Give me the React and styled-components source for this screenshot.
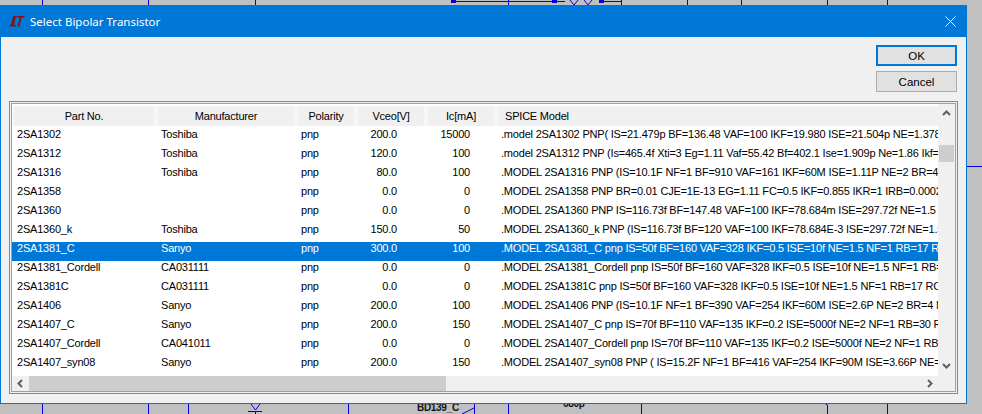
import React from 'react';
import styled, { createGlobalStyle } from 'styled-components';

const GlobalStyle = createGlobalStyle`
  html, body {
    margin: 0;
    padding: 0;
    background: #c0c0c0;
    overflow: hidden;
  }
`;

const columns = '2px 140px 4px 136px 4px 56px 4px 66px 4px 66px 4px 1fr';

const rows = [
  ['2SA1302', 'Toshiba', 'pnp', '200.0', '15000', '.model 2SA1302 PNP( IS=21.479p BF=136.48 VAF=100 IKF=19.980 ISE=21.504p NE=1.378 BR=3'],
  ['2SA1312', 'Toshiba', 'pnp', '120.0', '100', '.model 2SA1312 PNP (Is=465.4f Xti=3 Eg=1.11 Vaf=55.42 Bf=402.1 Ise=1.909p Ne=1.86 Ikf=0.1'],
  ['2SA1316', 'Toshiba', 'pnp', '80.0', '100', '.MODEL 2SA1316 PNP (IS=10.1F NF=1 BF=910 VAF=161 IKF=60M ISE=1.11P NE=2 BR=4 NR=1'],
  ['2SA1358', '', 'pnp', '0.0', '0', '.MODEL 2SA1358 PNP BR=0.01 CJE=1E-13 EG=1.11 FC=0.5 IKF=0.855 IKR=1 IRB=0.0002 ISE=1'],
  ['2SA1360', '', 'pnp', '0.0', '0', '.MODEL 2SA1360 PNP IS=116.73f BF=147.48 VAF=100 IKF=78.684m ISE=297.72f NE=1.5 BR=1'],
  ['2SA1360_k', 'Toshiba', 'pnp', '150.0', '50', '.MODEL 2SA1360_k PNP (IS=116.73f BF=120 VAF=100 IKF=78.684E-3 ISE=297.72f NE=1.5 BR=1'],
  ['2SA1381_C', 'Sanyo', 'pnp', '300.0', '100', '.MODEL 2SA1381_C pnp IS=50f BF=160 VAF=328 IKF=0.5 ISE=10f NE=1.5 NF=1 RB=17 RC=1.1'],
  ['2SA1381_Cordell', 'CA031111', 'pnp', '0.0', '0', '.MODEL 2SA1381_Cordell pnp IS=50f BF=160 VAF=328 IKF=0.5 ISE=10f NE=1.5 NF=1 RB=17 RC=1'],
  ['2SA1381C', 'CA031111', 'pnp', '0.0', '0', '.MODEL 2SA1381C pnp IS=50f BF=160 VAF=328 IKF=0.5 ISE=10f NE=1.5 NF=1 RB=17 RC=1.1'],
  ['2SA1406', 'Sanyo', 'pnp', '200.0', '100', '.MODEL 2SA1406 PNP (IS=10.1F NF=1 BF=390 VAF=254 IKF=60M ISE=2.6P NE=2 BR=4 NR=1'],
  ['2SA1407_C', 'Sanyo', 'pnp', '200.0', '150', '.MODEL 2SA1407_C pnp IS=70f BF=110 VAF=135 IKF=0.2 ISE=5000f NE=2 NF=1 RB=30 RC=1'],
  ['2SA1407_Cordell', 'CA041011', 'pnp', '0.0', '0', '.MODEL 2SA1407_Cordell pnp IS=70f BF=110 VAF=135 IKF=0.2 ISE=5000f NE=2 NF=1 RB=30 RC=1'],
  ['2SA1407_syn08', 'Sanyo', 'pnp', '200.0', '150', '.MODEL 2SA1407_syn08 PNP ( IS=15.2F NF=1 BF=416 VAF=254 IKF=90M ISE=3.66P NE=2 BR=4'],
];

const Page = styled.div`
  position: relative;
  width: 982px;
  height: 414px;
  padding-top: 5px;
  box-sizing: border-box;
  background: #c0c0c0;
  font-family: "Liberation Sans", Arial, sans-serif;
  font-size: 11px;
  color: #000;
  overflow: hidden;
`;

const Schematic = styled.svg`
  position: absolute;
  inset: 0;
`;

const PartLabel = styled.span`
  position: absolute;
  left: ${p => p.$x}px;
  top: ${p => p.$y}px;
  font-size: 10px;
  font-weight: bold;
  line-height: 12px;
  letter-spacing: -0.3px;
  color: #111;
`;

const Dialog = styled.div`
  position: relative;
  width: 967px;
  height: 399px;
  box-sizing: border-box;
  border: 1px solid #0078d7;
  background: #f0f0f0;
  display: flex;
  flex-direction: column;
`;

const TitleBar = styled.div`
  height: 31px;
  flex: none;
  background: #0078d7;
  display: flex;
  align-items: center;
  padding: 0 10px 0 8px;
  gap: 5px;
  color: #fff;
  font-family: "Noto Sans", "Liberation Sans", sans-serif;
  font-size: 11.5px;
`;

const Title = styled.span`
  flex: 1;
`;

const Buttons = styled.div`
  flex: none;
  height: 64px;
  display: flex;
  flex-direction: column;
  align-items: flex-end;
  gap: 5px;
  padding: 8px 9px 0 0;
  box-sizing: border-box;
`;

const Button = styled.button`
  width: 81px;
  height: 21px;
  padding: 0;
  box-sizing: border-box;
  background: #e1e1e1;
  border: ${p => (p.$primary ? '2px solid #0078d7' : '1px solid #adadad')};
  font: inherit;
  font-size: 11.5px;
  color: #000;
`;

const ListFrame = styled.div`
  margin: 0 8px;
  height: 293px;
  box-sizing: border-box;
  border: 1px solid #828790;
  padding: 1px;
  background: #f0f0f0;
`;

const ListInner = styled.div`
  height: 100%;
  box-sizing: border-box;
  border: 1px solid #a0a0a0;
  display: grid;
  grid-template-columns: 1fr 17px;
  grid-template-rows: 1fr 15px;
  background: #f0f0f0;
`;

const Table = styled.div`
  overflow: hidden;
  background: #fff;
`;

const Row = styled.div`
  display: grid;
  grid-template-columns: ${columns};
  height: ${p => (p.$header ? '22px' : '19px')};
  padding-bottom: ${p => (p.$header ? '0' : '7px')};
  align-items: center;
  background: ${p => (p.$selected ? '#0078d7' : p.$header ? '#f5f6fb' : '#fff')};
  color: ${p => (p.$selected ? '#fff' : '#000')};
  border-top: ${p => (p.$header ? '2px solid #fff' : 'none')};
  box-sizing: border-box;
  margin-bottom: ${p => (p.$header ? '2px' : '0')};
`;

const Spacer = styled.span`
  display: block;
`;

const textStyle = `
  font-size: 11px;
  letter-spacing: -0.2px;
`;

const HeadCell = styled.div`
  ${textStyle}
  height: 100%;
  display: flex;
  align-items: center;
  justify-content: ${p => (p.$left ? 'flex-start' : 'center')};
  padding-left: ${p => (p.$left ? '7px' : '0')};
  box-sizing: border-box;
  background: #f0f0f0;
`;

const Cell = styled.div`
  ${textStyle}
  white-space: nowrap;
  overflow: hidden;
  line-height: 14px;
  text-align: ${p => (p.$pad ? 'right' : 'left')};
  padding: ${p => (p.$pad ? `0 ${p.$pad}px 0 0` : '0 0 0 3px')};
`;

const VScroll = styled.div`
  position: relative;
  background: #f0f0f0;
`;

const VThumb = styled.div`
  position: absolute;
  top: 41px;
  left: 1px;
  width: 15px;
  height: 17px;
  background: #cdcdcd;
`;

const HScroll = styled.div`
  position: relative;
  background: #f0f0f0;
`;

const HThumb = styled.div`
  position: absolute;
  left: 17px;
  top: 0;
  width: 417px;
  height: 15px;
  background: #cdcdcd;
`;

const Arrow = styled.svg`
  position: absolute;
  left: ${p => p.$x}px;
  top: ${p => p.$y}px;
`;

const Corner = styled.div`
  background: #f0f0f0;
`;

const Chevron = ({ dir, x, y }) => {
  const d = {
    up: 'M1 6 L4.5 2.5 L8 6',
    down: 'M1 2 L4.5 5.5 L8 2',
    left: 'M6 1 L2.5 4.5 L6 8',
    right: 'M2 1 L5.5 4.5 L2 8',
  }[dir];
  return (
    <Arrow $x={x} $y={y} width="9" height="9" viewBox="0 0 9 9">
      <path d={d} fill="none" stroke="#606060" strokeWidth="2" />
    </Arrow>
  );
};

const Logo = () => (
  <svg width="16" height="11" viewBox="0 0 16 11">
    <path d="M4.2 0 H7 L5 9 H7.2 L6.8 10.5 H0 L1.2 9.2 Q2.4 8 3 5 Z" fill="#8c1010" />
    <path d="M7.5 0 H16 L14.6 1.6 H12.6 L10.4 10.5 H8.6 L10.6 1.6 H7.2 Z" fill="#8c1010" />
  </svg>
);

const Close = () => (
  <svg width="11" height="11" viewBox="0 0 11 11">
    <path d="M0.5 0.5 L10.5 10.5 M10.5 0.5 L0.5 10.5" stroke="#fff" strokeWidth="1" fill="none" />
  </svg>
);

export default function App() {
  return (
    <Page>
      <GlobalStyle />
      <Schematic width="982" height="414">
        <g stroke="#0000e0" strokeWidth="1" fill="none" shapeRendering="crispEdges">
          <path d="M42.5 0V5 M148.5 0V5 M255.5 0V5 M508.5 0V5 M621.5 0V5 M687.5 0V5 M741.5 0V5 M827.5 0V5 M887.5 0V5" />
          <path d="M453 1.5H565 M601 1.5H621" />
          <path d="M966 166.5H982" />
          <path d="M42.5 403V414 M148.5 403V414 M188.5 403V414 M348.5 403V414 M508.5 403V414 M641.5 403V414 M827.5 405V414 M887.5 403V414" />
          <path d="M248 411.5H262 M255.5 411V414 M474.5 404V414" />
        </g>
        <g stroke="#0000e0" strokeWidth="1" fill="none">
          <path d="M570 0L574 5L578 0 M584 0L588 5L592 0" />
          <path d="M251 404L255.5 410L260 404" />
          <path d="M462 414L474 408" />
          <path d="M824 403L827.5 405" />
        </g>
        <g fill="#0000e0" shapeRendering="crispEdges">
          <rect x="451" y="0" width="5" height="3" />
          <rect x="552" y="0" width="5" height="3" />
          <rect x="599" y="0" width="5" height="3" />
        </g>
      </Schematic>
      <PartLabel $x={417} $y={402}>BD139_C</PartLabel>
      <PartLabel $x={563} $y={398}>680p</PartLabel>
      <Dialog>
        <TitleBar>
          <Logo />
          <Title>Select Bipolar Transistor</Title>
          <Close />
        </TitleBar>
        <Buttons>
          <Button $primary>OK</Button>
          <Button>Cancel</Button>
        </Buttons>
        <ListFrame>
          <ListInner>
            <Table>
              <Row $header>
                <Spacer />
                <HeadCell>Part No.</HeadCell>
                <Spacer />
                <HeadCell>Manufacturer</HeadCell>
                <Spacer />
                <HeadCell>Polarity</HeadCell>
                <Spacer />
                <HeadCell>Vceo[V]</HeadCell>
                <Spacer />
                <HeadCell>Ic[mA]</HeadCell>
                <Spacer />
                <HeadCell $left>SPICE Model</HeadCell>
              </Row>
              {rows.map(r => (
                <Row key={r[0]} $selected={r[0] === '2SA1381_C'}>
                  <Spacer />
                  <Cell>{r[0]}</Cell>
                  <Spacer />
                  <Cell>{r[1]}</Cell>
                  <Spacer />
                  <Cell>{r[2]}</Cell>
                  <Spacer />
                  <Cell $pad={27}>{r[3]}</Cell>
                  <Spacer />
                  <Cell $pad={24}>{r[4]}</Cell>
                  <Spacer />
                  <Cell>{r[5]}</Cell>
                </Row>
              ))}
            </Table>
            <VScroll>
              <Chevron dir="up" x={4} y={5} />
              <VThumb />
              <Chevron dir="down" x={4} y={258} />
            </VScroll>
            <HScroll>
              <Chevron dir="left" x={4} y={3} />
              <HThumb />
              <Chevron dir="right" x={914} y={3} />
            </HScroll>
            <Corner />
          </ListInner>
        </ListFrame>
      </Dialog>
    </Page>
  );
}
